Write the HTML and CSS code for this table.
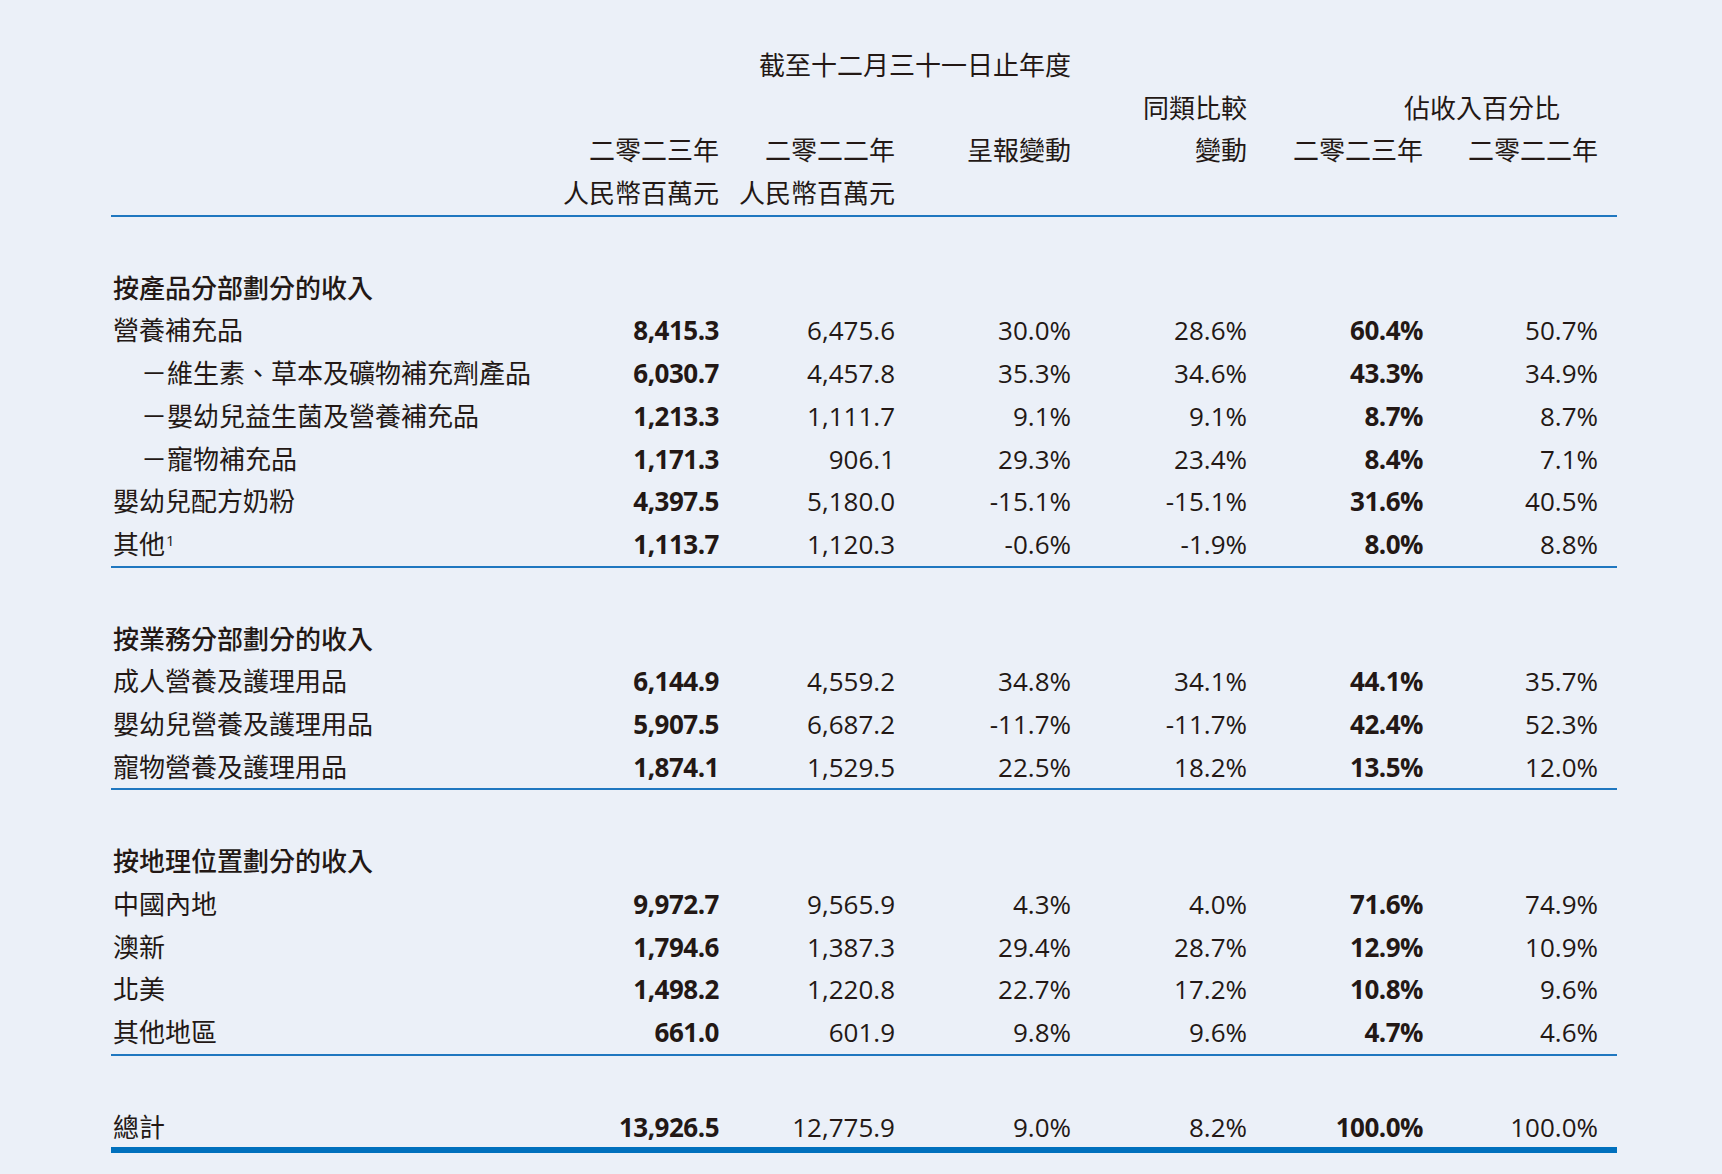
FILE: index.html
```html
<!DOCTYPE html>
<html lang="zh-Hant">
<head>
<meta charset="utf-8">
<title>收入</title>
<link rel="stylesheet" href="styles.css">
</head>
<body>
<div class="page">
  <div class="tbl">
    <div class="row head">
      <div class="c title">截至十二月三十一日止年度</div>
    </div>
    <div class="row head">
      <div class="c c5">同類比較</div>
      <div class="c pct">佔收入百分比</div>
    </div>
    <div class="row head">
      <div class="c c2">二零二三年</div>
      <div class="c">二零二二年</div>
      <div class="c">呈報變動</div>
      <div class="c">變動</div>
      <div class="c">二零二三年</div>
      <div class="c">二零二二年</div>
    </div>
    <div class="row head ruled">
      <div class="c c2">人民幣百萬元</div>
      <div class="c">人民幣百萬元</div>
    </div>

    <div class="spacer"></div>
    <div class="row"><div class="lbl sec">按產品分部劃分的收入</div></div>
    <div class="row"><div class="lbl">營養補充品</div><div class="c b">8,415.3</div><div class="c">6,475.6</div><div class="c">30.0%</div><div class="c">28.6%</div><div class="c b">60.4%</div><div class="c">50.7%</div></div>
    <div class="row"><div class="lbl sub">－維生素、草本及礦物補充劑產品</div><div class="c b">6,030.7</div><div class="c">4,457.8</div><div class="c">35.3%</div><div class="c">34.6%</div><div class="c b">43.3%</div><div class="c">34.9%</div></div>
    <div class="row"><div class="lbl sub">－嬰幼兒益生菌及營養補充品</div><div class="c b">1,213.3</div><div class="c">1,111.7</div><div class="c">9.1%</div><div class="c">9.1%</div><div class="c b">8.7%</div><div class="c">8.7%</div></div>
    <div class="row"><div class="lbl sub">－寵物補充品</div><div class="c b">1,171.3</div><div class="c">906.1</div><div class="c">29.3%</div><div class="c">23.4%</div><div class="c b">8.4%</div><div class="c">7.1%</div></div>
    <div class="row"><div class="lbl">嬰幼兒配方奶粉</div><div class="c b">4,397.5</div><div class="c">5,180.0</div><div class="c">-15.1%</div><div class="c">-15.1%</div><div class="c b">31.6%</div><div class="c">40.5%</div></div>
    <div class="row ruled"><div class="lbl">其他<sup class="fn">1</sup></div><div class="c b">1,113.7</div><div class="c">1,120.3</div><div class="c">-0.6%</div><div class="c">-1.9%</div><div class="c b">8.0%</div><div class="c">8.8%</div></div>

    <div class="spacer"></div>
    <div class="row"><div class="lbl sec">按業務分部劃分的收入</div></div>
    <div class="row"><div class="lbl">成人營養及護理用品</div><div class="c b">6,144.9</div><div class="c">4,559.2</div><div class="c">34.8%</div><div class="c">34.1%</div><div class="c b">44.1%</div><div class="c">35.7%</div></div>
    <div class="row"><div class="lbl">嬰幼兒營養及護理用品</div><div class="c b">5,907.5</div><div class="c">6,687.2</div><div class="c">-11.7%</div><div class="c">-11.7%</div><div class="c b">42.4%</div><div class="c">52.3%</div></div>
    <div class="row ruled"><div class="lbl">寵物營養及護理用品</div><div class="c b">1,874.1</div><div class="c">1,529.5</div><div class="c">22.5%</div><div class="c">18.2%</div><div class="c b">13.5%</div><div class="c">12.0%</div></div>

    <div class="spacer"></div>
    <div class="row"><div class="lbl sec">按地理位置劃分的收入</div></div>
    <div class="row"><div class="lbl">中國內地</div><div class="c b">9,972.7</div><div class="c">9,565.9</div><div class="c">4.3%</div><div class="c">4.0%</div><div class="c b">71.6%</div><div class="c">74.9%</div></div>
    <div class="row"><div class="lbl">澳新</div><div class="c b">1,794.6</div><div class="c">1,387.3</div><div class="c">29.4%</div><div class="c">28.7%</div><div class="c b">12.9%</div><div class="c">10.9%</div></div>
    <div class="row"><div class="lbl">北美</div><div class="c b">1,498.2</div><div class="c">1,220.8</div><div class="c">22.7%</div><div class="c">17.2%</div><div class="c b">10.8%</div><div class="c">9.6%</div></div>
    <div class="row ruled"><div class="lbl">其他地區</div><div class="c b">661.0</div><div class="c">601.9</div><div class="c">9.8%</div><div class="c">9.6%</div><div class="c b">4.7%</div><div class="c">4.6%</div></div>

    <div class="spacer last"></div>
    <div class="row total"><div class="lbl">總計</div><div class="c b">13,926.5</div><div class="c">12,775.9</div><div class="c">9.0%</div><div class="c">8.2%</div><div class="c b">100.0%</div><div class="c">100.0%</div></div>
  </div>
</div>
</body>
</html>
```

FILE: styles.css
```css
html, body {
  margin: 0;
  padding: 0;
  background: #ebf0f8;
}

body {
  font-family: "Open Sans", "Noto Sans CJK TC", "Noto Sans", sans-serif;
  font-size: 26px;
  color: #231815;
}

.page {
  padding: 44px 0 0 111px;
  min-height: 1130px;
}

.tbl {
  width: 1506px;
}

.row {
  display: grid;
  grid-template-columns: 451px repeat(5, 176px) 175px;
  height: 42.7px;
  align-items: center;
  line-height: 42.7px;
  white-space: nowrap;
}

.row.ruled {
  border-bottom: 2px solid #1f77c0;
}

.row.total {
  height: 41.7px;
  border-bottom: 6px solid #0070bd;
}

.spacer {
  height: 50px;
}

.spacer.last {
  height: 50px;
}

.c {
  text-align: right;
  padding-right: 19px;
}

.c.b {
  font-weight: 700;
  letter-spacing: -0.5px;
}

.head .title {
  grid-column: 2 / 5;
}

.head .c2 {
  grid-column: 2;
}

.head .c5 {
  grid-column: 5;
}

.head .pct {
  grid-column: 6 / 8;
  padding-right: 57px;
}

.lbl {
  grid-column: 1;
  padding-left: 2px;
}

.lbl.sub {
  padding-left: 30px;
}

.lbl.sec {
  font-weight: 500;
}

.fn {
  font-size: 15px;
  line-height: 0;
  vertical-align: 8px;
  margin-left: 1px;
}
```
